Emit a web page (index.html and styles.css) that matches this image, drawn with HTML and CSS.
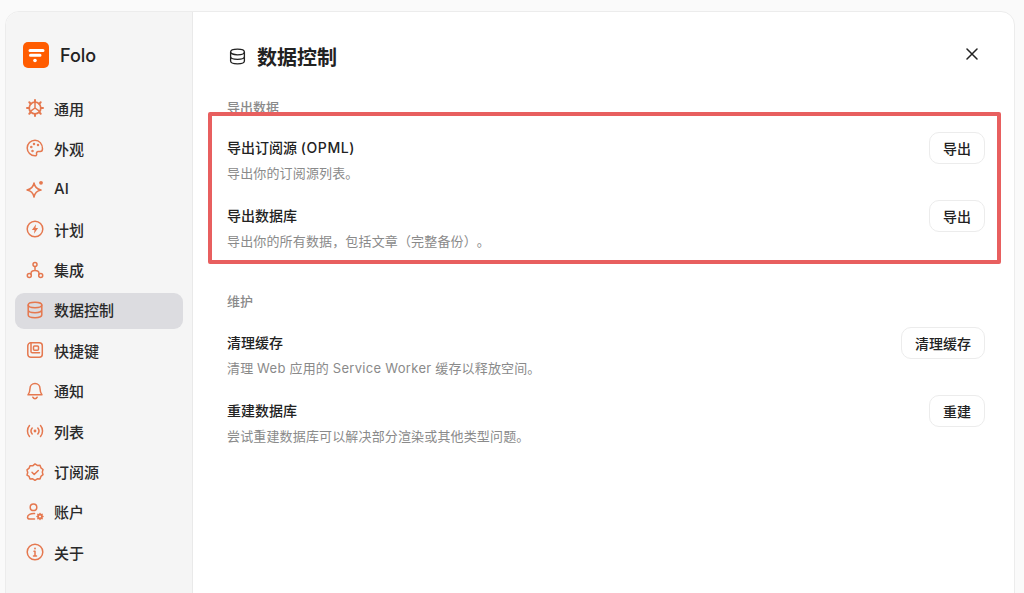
FILE: index.html
```html
<!doctype html>
<html lang="zh">
 <head>
  <meta charset="utf-8">
  <title>数据控制</title>
  <link rel="stylesheet" href="styles.css">
 </head>
 <body>
  <div class="window">
   <aside class="sidebar">
    <div class="brand">
     <svg class="logo" viewBox="0 0 26 26"><rect width="26" height="26" rx="5" fill="#ff5c00"/><path d="M7 8.500h13M7.500 13.300h9.500" stroke="#fff" stroke-width="3" stroke-linecap="round" fill="none"/><circle cx="12" cy="18.500" r="1.800" fill="#fff"/></svg>
     <span>Folo</span>
    </div>
    <nav class="nav">
     <a class="item"><svg class="ico" viewBox="0 0 18 18"><circle cx="9" cy="9" r="5.800" stroke-width="1.800"/><path d="M9 1v2M9 15v2M1 9h2M15 9h2M3.300 3.300l1.400 1.400M13.300 13.300l1.400 1.400M14.700 3.300l-1.400 1.400M4.700 13.300l-1.400 1.400" stroke-width="2"/><path d="M9 9V4M9 9l-4 2.800M9 9l4 2.800"/></svg>通用</a>
     <a class="item"><svg class="ico" viewBox="0 0 18 18"><path d="M9 1.200a7.800 7.800 0 1 0 0 15.600c1.300 0 1.900-.9 1.600-1.900-.4-1.200.2-2.300 1.600-2.300h2c1.300 0 2.300-1 2.300-2.800C16.500 4.800 13.200 1.200 9 1.200z"/><circle cx="5.300" cy="8" r=".5"/><circle cx="8" cy="5" r=".5"/><circle cx="12" cy="6" r=".5"/><circle cx="6.500" cy="12" r=".5"/></svg>外观</a>
     <a class="item"><svg class="ico" viewBox="0 0 18 18"><path d="M8 3c.8 4.200 2.800 6.200 7 7-4.200.8-6.200 2.800-7 7-.8-4.200-2.800-6.200-7-7 4.200-.8 6.200-2.800 7-7z"/><circle class="fill" cx="15" cy="2.800" r="1.900"/></svg>AI</a>
     <a class="item"><svg class="ico" viewBox="0 0 18 18"><circle cx="9" cy="9" r="7.800"/><path class="fill" d="M10 4.300L5.900 9.900h2.600l-.5 3.800 4.100-5.600H9.500z"/></svg>计划</a>
     <a class="item"><svg class="ico" viewBox="0 0 18 18"><circle cx="9" cy="3.500" r="2"/><circle cx="3.300" cy="14.500" r="2"/><circle cx="14.700" cy="14.500" r="2"/><path d="M9 5.500v4M5 13.300V12.500c0-2 1.500-3 4-3s4 1 4 3v.8"/></svg>集成</a>
     <a class="item active"><svg class="ico" viewBox="0 0 18 18"><ellipse cx="9" cy="4" rx="6.800" ry="2.700"/><path d="M2.200 4v10c0 1.500 3 2.700 6.800 2.700s6.800-1.200 6.800-2.700V4M2.200 9c0 1.500 3 2.700 6.800 2.700s6.800-1.200 6.800-2.700"/></svg>数据控制</a>
     <a class="item"><svg class="ico" viewBox="0 0 18 18"><rect x="1.800" y="1.800" width="14.500" height="14.500" rx="3"/><path d="M5 2v8.500c0 .8.500 1.300 1.300 1.300h7.200"/><rect x="7.500" y="5" width="5" height="4.200" rx="1"/></svg>快捷键</a>
     <a class="item"><svg class="ico" viewBox="0 0 18 18"><path d="M9 1.500c-3 0-5 2.200-5 5 0 3.200-.9 4.700-2 6.300h14c-1.100-1.600-2-3.100-2-6.300 0-2.800-2-5-5-5z"/><path d="M6.800 15.200c.5 1 1.200 1.500 2.200 1.500s1.700-.5 2.200-1.500"/></svg>通知</a>
     <a class="item"><svg class="ico" viewBox="0 0 18 18"><path d="M3.500 3.500C.8 6.500.8 11.500 3.500 14.500M14.500 3.500c2.700 3 2.700 8 0 11M6.200 6c-1.400 1.700-1.400 4.300 0 6M11.800 6c1.400 1.700 1.400 4.300 0 6"/><circle class="fill" cx="9" cy="9" r="1.400"/></svg>列表</a>
     <a class="item"><svg class="ico" viewBox="0 0 18 18"><path d="M9 .9l2.300 1.500 2.700-.1.900 2.500 2.100 1.700-.7 2.600.7 2.600-2.100 1.700-.9 2.500-2.700-.1L9 17.300l-2.300-1.500-2.700.1-.9-2.500L1 12.100l.7-2.600L1 6.900l2.100-1.700.9-2.500 2.700.1z"/><path d="M6 9.300l2.200 2.200 4.100-4"/></svg>订阅源</a>
     <a class="item"><svg class="ico" viewBox="0 0 18 18"><circle cx="7.500" cy="4.300" r="3.300"/><path d="M8.500 10.600c-3.700-.2-7 1.200-7 3.600 0 1.400 1 1.800 2.500 1.800h4.500"/><circle cx="14" cy="13.500" r="1.900" stroke-width="1.700"/><path d="M14 10.400v.8M14 15.800v.8M11 13.500h.8M16.200 13.500h.8M11.900 11.400l.5.500M15.600 15.100l.5.500M16.100 11.400l-.5.500M12.400 15.100l-.5.500"/></svg>账户</a>
     <a class="item"><svg class="ico" viewBox="0 0 18 18"><circle cx="9" cy="9" r="7.800"/><path d="M8 8.300h1v4.700M7.500 13h3"/><circle class="fill" cx="9" cy="5.500" r=".9"/></svg>关于</a>
    </nav>
   </aside>
   <main class="main">
    <header class="head">
     <h1 class="heading">
      <svg class="head-ico" viewBox="0 0 18 18"><ellipse cx="9" cy="4.200" rx="7.300" ry="3"/><path d="M1.700 4.200v9.600c0 1.700 3.300 3 7.300 3s7.300-1.300 7.300-3V4.200M1.700 9c0 1.700 3.300 3 7.300 3s7.300-1.300 7.300-3"/></svg>
      数据控制
     </h1>
     <svg class="close" viewBox="0 0 12 12"><path d="M1 1l10 10M11 1L1 11"/></svg>
    </header>

    <section class="group">
     <h2 class="label">导出数据</h2>
     <div class="row">
      <div><div class="name">导出订阅源 <span class="latin">(OPML)</span></div><div class="desc">导出你的订阅源列表。</div></div>
      <button class="btn">导出</button>
     </div>
     <div class="row">
      <div><div class="name">导出数据库</div><div class="desc">导出你的所有数据，包括文章（完整备份）。</div></div>
      <button class="btn">导出</button>
     </div>
    </section>

    <section class="group second">
     <h2 class="label">维护</h2>
     <div class="row">
      <div><div class="name">清理缓存</div><div class="desc">清理 <span class="latin">Web</span> 应用的 <span class="latin">Service Worker</span> 缓存以释放空间。</div></div>
      <button class="btn">清理缓存</button>
     </div>
     <div class="row">
      <div><div class="name">重建数据库</div><div class="desc">尝试重建数据库可以解决部分渲染或其他类型问题。</div></div>
      <button class="btn">重建</button>
     </div>
    </section>
   </main>
  </div>
  <div class="highlight"></div>
 </body>
</html>
```

FILE: styles.css
```css
html, body { margin: 0; height: 100%; overflow: hidden; }
body { background: #fafafa; color: #222; font-family: Inter, "Noto Sans CJK SC", sans-serif; text-spacing-trim: space-all; padding: 11px 9px 0 5px; box-sizing: border-box; position: relative; }

.window { display: flex; height: 600px; border: 1px solid #ececec; border-radius: 14px; overflow: hidden; background: #fff; }

.sidebar { width: 187px; flex: none; background: #f5f5f5; border-right: 1px solid #e9e9e9; padding: 30px 9px 0; box-sizing: border-box; }
.brand { display: flex; align-items: center; gap: 11px; padding-left: 8px; height: 26px; font-size: 18px; font-weight: 500; color: #222; }
.logo { width: 26px; height: 26px; }

.nav { display: flex; flex-direction: column; gap: 4.4px; margin-top: 23px; }
.item { display: flex; align-items: center; gap: 10px; height: 36px; padding: 0 0 2px 11px; box-sizing: border-box; border-radius: 9px; font-size: 15px; font-weight: 500; color: #2a2a2a; }
.item.active { background: #dcdce0; }
.ico { width: 18px; height: 18px; flex: none; fill: none; stroke: #e5784f; stroke-width: 1.500; stroke-linecap: round; stroke-linejoin: round; }
.ico .fill { fill: #e5784f; stroke: none; }

.main { flex: 1; padding: 0 29px 0 34px; }
.head { display: flex; align-items: center; justify-content: space-between; height: 30px; margin-top: 27px; }
.heading { display: flex; align-items: center; gap: 11px; margin: 0; padding: 4px 0 0 2px; font-size: 20px; font-weight: 700; color: #222; }
.head-ico { width: 17px; height: 17px; fill: none; stroke: #222; stroke-width: 1.400; }
.close { width: 12px; height: 12px; margin-right: 7px; fill: none; stroke: #222; stroke-width: 1.500; stroke-linecap: round; }

.group { margin-top: 28px; }
.group.second { margin-top: 23px; }
.second .label { margin-bottom: 16px; }
.label { margin: 0 0 15px; height: 20px; line-height: 20px; font-size: 13px; font-weight: 500; color: #8a8a8a; }
.row { display: flex; align-items: flex-start; justify-content: space-between; height: 68px; padding-top: 4px; box-sizing: border-box; }
.name { font-size: 14px; line-height: 24px; font-weight: 500; color: #222; }
.desc { font-size: 13px; line-height: 20px; margin-top: 3px; letter-spacing: .15px; color: #8a8a8a; }
.latin { letter-spacing: .3px; }
.name .latin { letter-spacing: .6px; }
.btn { height: 32px; margin-top: -4px; padding: 0 13px; background: #fff; border: 1px solid #ececec; border-radius: 10px; font: 500 14px Inter, "Noto Sans CJK SC", sans-serif; color: #222; }

.highlight { position: absolute; left: 208px; top: 112px; width: 793px; height: 152px; box-sizing: border-box; border: 4px solid #e85f5f; border-radius: 2px; }
```
